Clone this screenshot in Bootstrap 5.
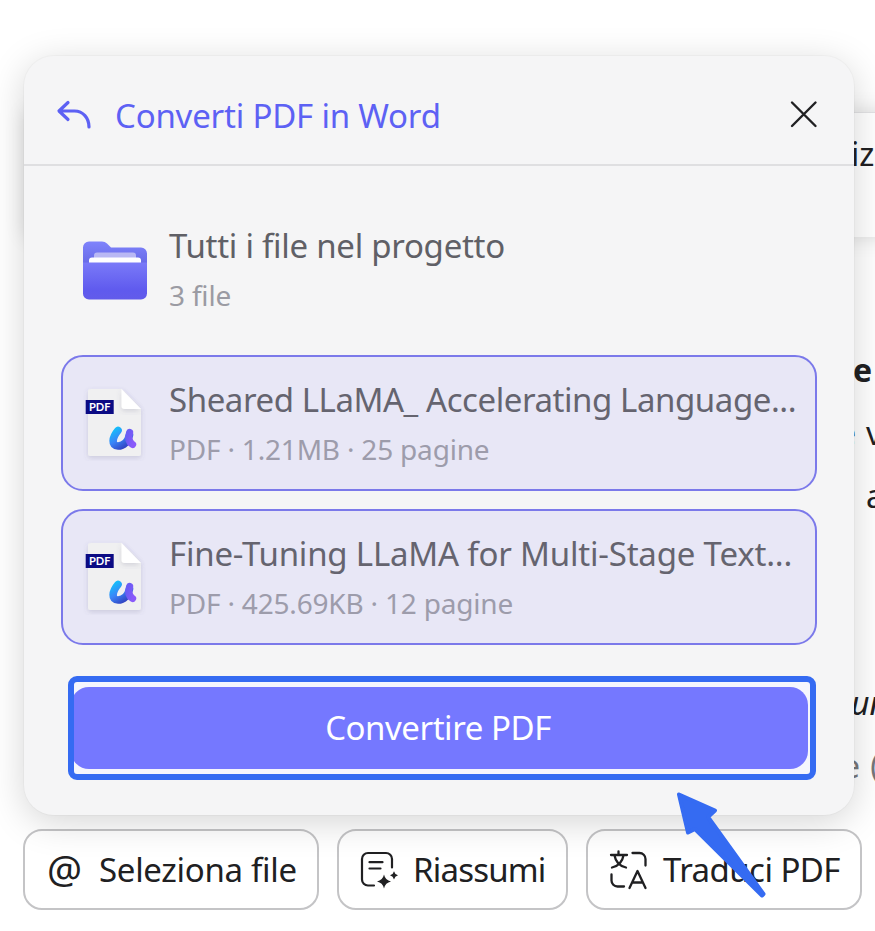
<!DOCTYPE html>
<html lang="it">
<head>
<meta charset="utf-8">
<meta name="viewport" content="width=device-width, initial-scale=1">
<title>Converti PDF in Word</title>
<link href="https://cdn.jsdelivr.net/npm/bootstrap@5.3.0/dist/css/bootstrap.min.css" rel="stylesheet">
<style>
body{font-family:"Noto Sans","Open Sans",sans-serif;background:#fff;color:#202022;line-height:1}
.stage{width:875px;height:931px;padding:56px 13px 0 24px}
.behind{inset:0;z-index:0}
.behind>*{position:absolute;white-space:nowrap}
.backbox{left:26px;top:112px;width:900px;height:125px;background:#fff;box-shadow:0 0 20px rgba(0,0,0,.14);border-top:1px solid #e2e2e4}
.bt{font-size:32px;line-height:40px}
.dim{color:#77777b}
.panel{width:830px;height:759px;background:#f5f5f6;border-radius:30px;z-index:2;box-shadow:0 0 0 1px rgba(0,0,0,.025),0 7px 36px rgba(0,0,0,.17)}
.phead{height:110px;border-bottom:2px solid #dfdfe1;padding:8px 36px 0 31px}
.ttl{font-size:33px;color:#5d61f4;letter-spacing:-.2px;margin-left:24px;padding-top:3px;white-space:nowrap}
.pbody{padding:35px 37px 0}
.item{height:136px;border:2px solid transparent;border-radius:22px;padding-left:19px;margin-bottom:18px}
.item.sel{background:#e8e7f6;border-color:#7b79ea}
.pic{width:68px;height:76px;flex:none}
.info{margin-left:19px}
.nm{font-size:33px;color:#606066;white-space:nowrap;line-height:46px}
.meta{font-size:28px;color:#9b9ba3;white-space:nowrap;line-height:40px;margin-top:6px;letter-spacing:-.19px}
.item.sel .nm{color:#65646f}
.item.sel .meta{color:#9d9cab}
.n1{letter-spacing:-.27px}.n2{letter-spacing:-.43px}.n3{letter-spacing:-.2px}
.frame{height:104px;width:748px;margin:31px 0 0 7px;border:6px solid #356bf2;border-radius:9px;background:#f5f6fd;padding:5px 2px 5px 0}
.go,.go:hover{height:82px;width:737px;margin-left:-3px;background:#7578ff;color:#fff;border:0;border-radius:18px;font-size:33px;letter-spacing:-.45px;line-height:1;flex:none;padding:0 3px 2px 0}
.chips{margin:14px 0 0 -1px;gap:18px;z-index:1}
.chip{height:81px;border:2px solid #c4c4c6;border-radius:19px;font-size:33px;white-space:nowrap;flex:none;background:transparent;color:#202022;padding:0}
.c1{width:296px;padding-left:22px}.c2{width:231px;padding-left:20px}.c3{width:276px;padding-left:20px}
.at{font-size:39px;width:52px;text-align:left;line-height:1;margin-top:-5px}
.l1{letter-spacing:-.3px}
.l2{letter-spacing:-.8px;margin-left:14px}
.l3{letter-spacing:-.55px;margin-left:15px}
.arrow{left:670px;top:785px;z-index:5}
</style>
</head>
<body>
<div class="stage position-relative overflow-hidden">
  <div class="behind position-absolute">
    <div class="backbox"></div>
    <div class="bt" style="left:851px;top:134px">izz</div>
    <div class="bt fw-bold" style="left:853px;top:350px">e</div>
    <div class="bt" style="left:838px;top:413px">e</div>
    <div class="bt" style="left:866px;top:413px">v</div>
    <div class="bt" style="left:866px;top:476px">a</div>
    <div class="bt fst-italic" style="left:851px;top:683px">un</div>
    <div class="bt dim" style="left:842px;top:746px;word-spacing:2px">e (</div>
  </div>

  <section class="panel position-relative">
    <header class="phead d-flex align-items-center">
      <svg width="36" height="32" viewBox="0 0 36 32" fill="none" stroke="#5d61f4" stroke-width="3.2" stroke-linecap="round" stroke-linejoin="round" class="flex-shrink-0"><path d="M13 4.500 4 13l9 8.500M5 13h14.500C28 13 34 20 34 29"/></svg>
      <h1 class="ttl mb-0 fw-normal">Converti PDF in Word</h1>
      <svg width="28" height="28" viewBox="0 0 28 28" fill="none" stroke="#202022" stroke-width="2.400" stroke-linecap="round" class="ms-auto flex-shrink-0"><path d="M2 2.500l23.500 23.500M25.500 2.500 2 26"/></svg>
    </header>

    <div class="pbody">
      <div class="item d-flex align-items-center">
        <svg class="pic" viewBox="0 0 68 76">
          <defs>
            <linearGradient id="fb" x1="0" y1="0" x2="0" y2="1"><stop stop-color="#7f83fc"/><stop offset="1" stop-color="#595ad8"/></linearGradient>
            <linearGradient id="ff" x1="0" y1="0" x2="0" y2="1"><stop stop-color="#7a7af8"/><stop offset=".75" stop-color="#5f5aee"/><stop offset="1" stop-color="#625bea"/></linearGradient>
          </defs>
          <g transform="translate(0 1.500)">
          <path d="M1 15a6 6 0 0 1 6-6h13q3 0 5 2l4 4h30a6 6 0 0 1 6 6v25H1z" fill="url(#fb)"/>
          <path d="M12 26v-3q0-3 3-3h36q3 0 3 3v3z" fill="#b9b8f4"/>
          <path d="M7 31v-3q0-3 3-3h46q3 0 3 3v3z" fill="#fff"/>
          <path d="M1 30h64v31a6 6 0 0 1-6 6H7a6 6 0 0 1-6-6z" fill="url(#ff)"/>
          </g>
        </svg>
        <div class="info"><div class="nm n1">Tutti i file nel progetto</div><div class="meta m1">3 file</div></div>
      </div>

      <div class="item sel d-flex align-items-center">
        <svg class="pic" viewBox="0 0 68 76">
          <defs>
            <linearGradient id="u1" gradientUnits="userSpaceOnUse" x1="33" y1="42" x2="46" y2="63"><stop stop-color="#12c4fa"/><stop offset=".5" stop-color="#3a84f8"/><stop offset="1" stop-color="#3038b8"/></linearGradient>
            <linearGradient id="u2" x1="0" y1="0" x2="1" y2="1"><stop stop-color="#6a5cf4"/><stop offset="1" stop-color="#8a5afa"/></linearGradient>
            <filter id="sh" x="-30%" y="-30%" width="160%" height="160%"><feDropShadow dx="0" dy="2" stdDeviation="2.500" flood-color="#55557a" flood-opacity=".2"/></filter>
            <g id="doc">
              <path d="M9 4h30.500l19.500 20v45q0 2-2 2H8q-2 0-2-2V6q0-2 3-2z" fill="#f0f0f1" filter="url(#sh)"/>
              <path d="M39.500 4v17q0 3 3 3H59z" fill="#fff" filter="url(#sh)"/>
              <rect x="3.700" y="15" width="28" height="14" fill="#0b0b84"/>
              <text x="17.700" y="26.200" text-anchor="middle" font-family="Lato,sans-serif" font-size="11.800" font-weight="700" fill="#fff" textLength="21.500" lengthAdjust="spacingAndGlyphs">PDF</text>
              <path d="M36 45.500C30 52.500 29 61 36 61c6 0 10-5 11.500-11" fill="none" stroke="url(#u1)" stroke-width="7.600" stroke-linecap="round"/>
              <path d="M47.600 47.500c-1.600 5-1.200 9.500 3 12" fill="none" stroke="url(#u2)" stroke-width="7.200" stroke-linecap="round"/>
            </g>
          </defs>
          <use href="#doc"/>
        </svg>
        <div class="info"><div class="nm n2">Sheared LLaMA_ Accelerating Language...</div><div class="meta m2">PDF · 1.21MB · 25 pagine</div></div>
      </div>

      <div class="item sel d-flex align-items-center">
        <svg class="pic" viewBox="0 0 68 76"><use href="#doc"/></svg>
        <div class="info"><div class="nm n3">Fine-Tuning LLaMA for Multi-Stage Text...</div><div class="meta m3">PDF · 425.69KB · 12 pagine</div></div>
      </div>

      <div class="frame overflow-hidden d-flex">
        <button type="button" class="btn go">Convertire PDF</button>
      </div>
    </div>
  </section>

  <div class="chips d-flex position-relative">
    <button type="button" class="btn chip c1 d-flex align-items-center"><span class="at">@</span><span class="l1">Seleziona file</span></button>
    <button type="button" class="btn chip c2 d-flex align-items-center">
      <svg width="40" height="40" viewBox="0 0 40 40" fill="none" stroke="#202022" stroke-width="2.200" stroke-linecap="round" stroke-linejoin="round"><path d="M15 35.500H9a6 6 0 0 1-6-6V9a6 6 0 0 1 6-6h18a6 6 0 0 1 6 6v8.500M10.500 12.200h13M10.500 18.500h11"/><path d="M25 24.500q1.300 5.800 7 7-5.700 1.200-7 7-1.300-5.800-7-7 5.700-1.200 7-7zM35 21.200q.8 3.300 4 4.100-3.200.8-4 4.100-.8-3.300-4-4.100 3.200-.8 4-4.100z" fill="#202022" stroke="none"/></svg>
      <span class="l2">Riassumi</span></button>
    <button type="button" class="btn chip c3 d-flex align-items-center">
      <svg width="40" height="42" viewBox="0 0 40 42" fill="none" stroke="#202022" stroke-width="2.300" stroke-linecap="round" stroke-linejoin="round"><path d="M10.500 2.500v3M3 6h16M15.500 6.500C14.500 12 10.500 17 4 18.500M6.500 6.500C7.500 12 11.500 17 18 18.500M24.500 4h7a6 6 0 0 1 6 6v6.500M3.500 25.500v6a6 6 0 0 0 6 6h6.500M21.500 39l8-17 8 17M24.300 33.500h10.400"/></svg>
      <span class="l3">Traduci PDF</span></button>
  </div>

  <svg class="arrow position-absolute" width="105" height="120" viewBox="670 785 105 120"><path d="M679 794.500 715 810.500 708 817 763.500 894 762 895.500 695 829 688 832.500z" fill="#356bf2" stroke="#356bf2" stroke-width="4" stroke-linejoin="round"/></svg>
</div>
<script src="https://cdn.jsdelivr.net/npm/bootstrap@5.3.0/dist/js/bootstrap.bundle.min.js"></script>
</body>
</html>
